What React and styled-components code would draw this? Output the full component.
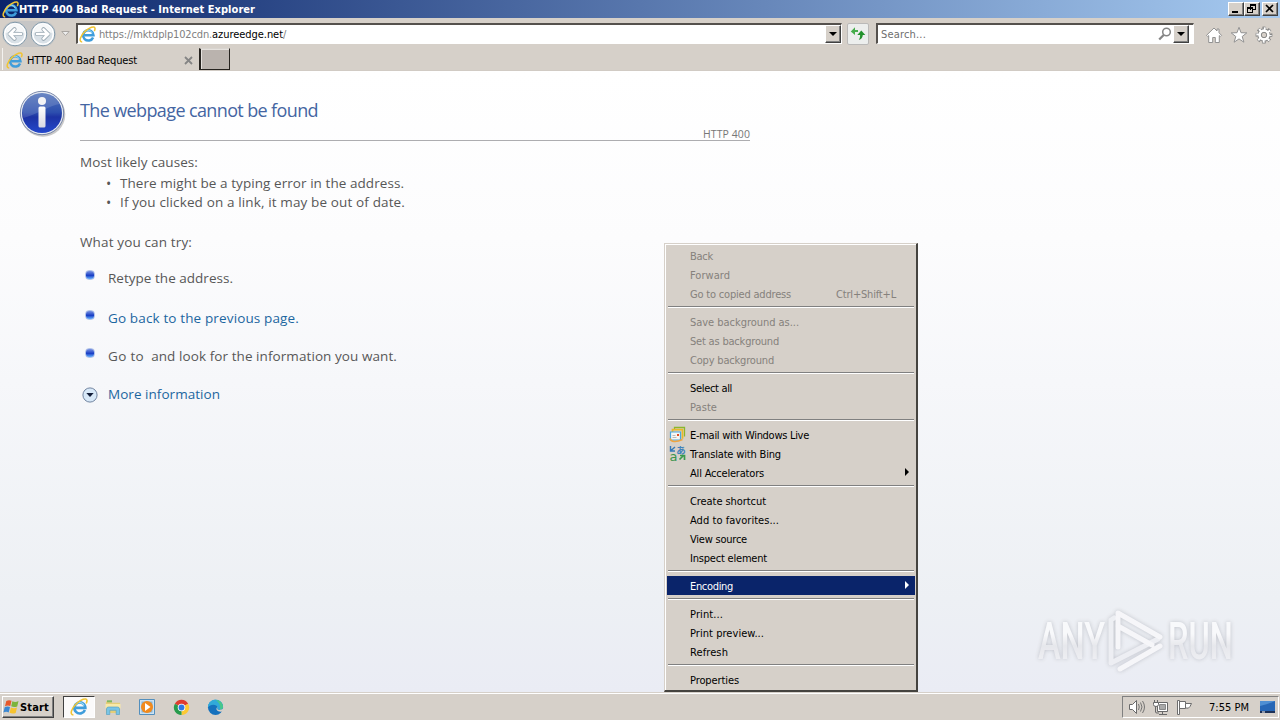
import React from 'react'
import styled, { createGlobalStyle, css } from 'styled-components'

const menuGroups = [
    [
        { label: 'Back', width: 23, disabled: true },
        { label: 'Forward', width: 40, disabled: true },
        { label: 'Go to copied address', width: 101, disabled: true, shortcut: 'Ctrl+Shift+L' },
    ],
    [
        { label: 'Save background as...', width: 109, disabled: true },
        { label: 'Set as background', width: 89, disabled: true },
        { label: 'Copy background', width: 84, disabled: true },
    ],
    [
        { label: 'Select all', width: 42 },
        { label: 'Paste', width: 27, disabled: true },
    ],
    [
        { label: 'E-mail with Windows Live', width: 119, icon: 'mail' },
        { label: 'Translate with Bing', width: 91, icon: 'translate' },
        { label: 'All Accelerators', width: 74, submenu: true },
    ],
    [
        { label: 'Create shortcut', width: 76 },
        { label: 'Add to favorites...', width: 89 },
        { label: 'View source', width: 57 },
        { label: 'Inspect element', width: 77 },
    ],
    [{ label: 'Encoding', width: 43, submenu: true, active: true }],
    [
        { label: 'Print...', width: 33 },
        { label: 'Print preview...', width: 74 },
        { label: 'Refresh', width: 38 },
    ],
    [{ label: 'Properties', width: 49 }],
]

/* stretches or tightens the tracking so a label takes the given width */
function Fit({ width, children }) {
    const ref = React.useRef(null)
    const [spacing, setSpacing] = React.useState(0)
    React.useLayoutEffect(() => {
        const natural = ref.current.getBoundingClientRect().width
        setSpacing((width - natural) / ref.current.textContent.length)
    }, [])
    return <FitText ref={ref} style={{ letterSpacing: `${spacing}px` }}>{children}</FitText>
}

const IeIcon = ({ size = 17 }) => (
    <svg width={size} height={size} viewBox="0 0 17 17" fill="none">
        <path d="M14.1 11.400A5.200 5.200 0 1 1 14.500 9.300H5.500" stroke="#3f9ddb" strokeWidth="2.500" />
        <path d="M13.300 7.200A4.600 4.600 0 0 0 4.900 6.700" stroke="#9bdcf7" strokeWidth="1" />
        <path d="M3.200 15.900C-.6 15.800 1.300 9.900 6 5.400 10.300 1.400 15.600-.6 16 2.300c.1.900-.2 1.900-.7 2.900" stroke="#f0c433" strokeWidth="1.500" />
    </svg>
)

const ArrowIcon = ({ flip }) => (
    <svg width="26" height="26" viewBox="0 0 26 26" fill="none">
        <circle cx="13" cy="13" r="11.800" fill="#e9eef2" stroke="#8299a9" strokeWidth="1" />
        <circle cx="13" cy="13" r="10.200" fill="#d9e1e7" stroke="#fff" strokeWidth="1.300" />
        <path d="M4 12a9 9 0 0 1 18 0c-5-2-13-2-18 0z" fill="#f6f8f9" />
        <g transform={flip ? 'matrix(-1 0 0 1 26 0)' : undefined}>
            <path d="M19 13H8M12.500 8.300 7.800 13l4.700 4.700" stroke="#9aa9b3" strokeWidth="4.200" strokeLinejoin="round" strokeLinecap="round" />
            <path d="M19 13H8M12.500 8.300 7.800 13l4.700 4.700" stroke="#fff" strokeWidth="2.600" strokeLinecap="round" />
        </g>
    </svg>
)

const InfoIcon = () => (
    <svg width="50" height="50" viewBox="0 0 50 50">
        <defs>
            <linearGradient id="info" x1="0" y1="0" x2="0" y2="1">
                <stop offset="0" stopColor="#5273b9" />
                <stop offset=".48" stopColor="#2d4fae" />
                <stop offset=".6" stopColor="#1d33a4" />
                <stop offset="1" stopColor="#2448cc" />
            </linearGradient>
            <linearGradient id="stem" x1="0" y1="0" x2="0" y2="1">
                <stop offset="0" stopColor="#fff" />
                <stop offset="1" stopColor="#d8d8e2" />
            </linearGradient>
        </defs>
        <circle cx="26" cy="26.500" r="22.300" fill="#777" opacity=".4" />
        <circle cx="25" cy="25" r="21.700" fill="#e6eaf2" stroke="#5d6f98" strokeWidth=".8" />
        <circle cx="25" cy="25" r="20" fill="url(#info)" />
        <path d="M5.500 24A19.500 19.500 0 0 1 42.500 16C34 17 21 26 6.500 30z" fill="#fff" opacity=".14" />
        <circle cx="25" cy="13" r="4" fill="#f4f4f6" />
        <rect x="21.500" y="18.500" width="7" height="21" rx="1.500" fill="url(#stem)" />
    </svg>
)

const RefreshIcon = () => (
    <svg width="16" height="14" viewBox="0 0 16 14">
        <path d="M.8 4.500 5 .3v2.600h3v2H5v3z" fill="#45ad4b" />
        <path d="M11.300 3.500 15.300 8h-2.500c-.2 2.700-1.500 4.300-4 5 1-1.500 1.300-3 1.300-5H7.300z" fill="#23922d" />
    </svg>
)

const SearchIcon = () => (
    <svg width="14" height="14" viewBox="0 0 14 14" fill="none" stroke="#858585">
        <circle cx="8.500" cy="5" r="3.800" strokeWidth="1.500" />
        <path d="M5.700 8 1.200 12.500" strokeWidth="2.300" />
    </svg>
)

const HomeIcon = () => (
    <svg width="18" height="18" viewBox="0 0 18 18" fill="#fff" stroke="#929292" strokeLinejoin="round">
        <path d="M9 2 1.500 9.300l1.200 1.200 1-.9V16.500h4v-5h2.600v5h4V9.600l1 .9 1.200-1.200L14 6.800V3h-2v2z" />
    </svg>
)

const StarIcon = () => (
    <svg width="18" height="18" viewBox="0 0 18 18" fill="#fff" stroke="#929292" strokeLinejoin="round">
        <path d="m9 1.300 2 5.400 5.800.2-4.600 3.600 1.700 5.700L9 12.900l-4.900 3.300 1.700-5.700L1.200 6.900 7 6.700z" />
    </svg>
)

const GearIcon = () => (
    <svg width="18" height="18" viewBox="0 0 18 18" fill="none">
        <circle cx="9" cy="9" r="5.700" stroke="#888" strokeWidth="2" />
        <circle cx="9" cy="9" r="6.600" stroke="#888" strokeWidth="3.600" strokeDasharray="3.200 1.984" strokeDashoffset="1.600" />
        <circle cx="9" cy="9" r="6.300" stroke="#fff" strokeWidth="2.800" strokeDasharray="1.800 3.148" strokeDashoffset=".900" />
        <circle cx="9" cy="9" r="4.400" stroke="#fff" strokeWidth="2.600" />
        <circle cx="9" cy="9" r="2.700" stroke="#888" />
    </svg>
)

const MailIcon = () => (
    <svg width="17" height="17" viewBox="0 0 17 17" fill="none">
        <path d="M5.500 4V1.500h10v9" stroke="#8ab62e" strokeWidth="1.300" />
        <path d="M3.500 6V3.700h10v9" stroke="#e9b82a" strokeWidth="1.700" />
        <path d="M1.500 6h10v8h-10z" fill="#f7f7f2" stroke="#49a7dd" strokeWidth="1.200" />
        <path d="M3.500 11.500h4M3.500 9.500h3" stroke="#bbb" />
        <path d="M8 8h2v2H8z" fill="#e24b22" />
        <path d="M1 12.500c1 3.500 6 4 12.500 1" stroke="#f0a541" strokeWidth="1.500" />
    </svg>
)

const TranslateIcon = () => (
    <TranslateSvg width="17" height="17" viewBox="0 0 17 17" fill="none">
        <path d="M1.500 1v5H6M2 5.500 6 2" stroke="#3579b8" strokeWidth="1.400" />
        <text x="7.300" y="8.500" fontSize="9.500" fontWeight="bold" fontFamily="Noto Sans CJK JP, sans-serif" fill="#4182ba">あ</text>
        <text x="0.500" y="15.500" fontSize="13" fontFamily="DejaVu Sans, sans-serif" fill="#3a944c">a</text>
        <path d="m10.500 14.500 4-4M11 10.500h4.500V15" stroke="#3b9b4d" strokeWidth="1.700" />
    </TranslateSvg>
)

const WindowsIcon = () => (
    <svg width="17" height="16" viewBox="0 0 17 16">
        <path d="M3.300 2Q6 .4 8.500 1.800L7.300 7Q4.600 5.900 2 7.300z" fill="#e8592b" />
        <path d="M9.400 2.300q2.900 1.400 6.100-.2l-1.300 5.300Q11 8.700 8.200 7.300z" fill="#7cb43c" />
        <path d="M1.700 8.300q2.700-1.300 5.300-.2l-1.300 5.300Q3 12.200.4 13.600z" fill="#3c88d2" />
        <path d="M7.900 8.400q2.900 1.400 6.100.1L12.700 13.900q-3.100 1.300-6.100-.1z" fill="#f6c330" />
    </svg>
)

const FolderIcon = () => (
    <svg width="18" height="18" viewBox="0 0 18 18">
        <path d="M2 3.500h5l1 1.300h8V15H2z" fill="#e5ce78" />
        <path d="M1.500 6h15v4.500h-15z" fill="#f8e9a8" />
        <path d="M3 2.300h5v2H3z" fill="#80b760" />
        <path d="M2.500 16.500V11q0-2 2-2h9q2 0 2 2v5.500h-3.300V12.300H5.800v4.200z" fill="#79c4e6" stroke="#4b9cc5" strokeWidth=".6" />
    </svg>
)

const PlayerIcon = () => (
    <svg width="18" height="18" viewBox="0 0 18 18">
        <path d="M1.500 1.500h15v15h-15z" fill="#cce2f2" stroke="#538fbd" />
        <path d="M3.500 3.500h11v11h-11z" fill="#85b2d5" />
        <circle cx="9" cy="9" r="6" fill="#f18a1d" />
        <path d="M7 5v8l5.500-4z" fill="#fff" />
    </svg>
)

const ChromeIcon = () => (
    <svg width="17" height="17" viewBox="0 0 18 18">
        <path d="M9 9 2 5A8 8 0 0 1 16 5z" fill="#df3c30" />
        <path d="M9 9h0L16 5a8 8 0 0 1-7 12z" fill="#fcc934" />
        <path d="M9 9v0l0 8A8 8 0 0 1 2 5z" fill="#289b4c" />
        <circle cx="9" cy="9" r="4" fill="#fff" />
        <circle cx="9" cy="9" r="3.100" fill="#2e78e4" />
    </svg>
)

const EdgeIcon = () => (
    <svg width="17" height="17" viewBox="0 0 18 18">
        <circle cx="9" cy="9" r="8" fill="#1571bd" />
        <path d="M1 9A8 8 0 0 1 17 8c.2 2.700-1.800 3.600-4.300 3.500-2.300-.1-1.700-1.200-1.700-2.500C11 5.700 3.500 4.800 1 9z" fill="#31a9d9" />
        <path d="M9 1c4.500 0 8 3.500 8 7 0 2-1.200 3.200-3.500 3.400C15 8 13 3 9 1z" fill="#48c78a" />
        <path d="M11 8.500c0 1.500-.8 2.500 1.700 3 1.500.1 3-.2 4.300-1.500v3c-2 1-5.700.5-6.600-1.300C9.600 10.500 10 9.500 11 8.500z" fill="#d6d0c9" />
    </svg>
)

const SoundIcon = () => (
    <svg width="18" height="16" viewBox="0 0 18 16" fill="none" stroke="#696969">
        <path d="M1.500 5.500h3l4-4v13l-4-4h-3z" fill="#fff" />
        <path d="M10.500 5q1.500 3 0 6M12.500 3.500q3 4.500 0 9M14.500 2q4 6 0 12" strokeWidth=".9" />
    </svg>
)

const NetworkIcon = () => (
    <svg width="18" height="17" viewBox="0 0 18 17" fill="#fff" stroke="#686868">
        <path d="M5.500 3.500h10v9h-10z" />
        <path d="M7.500 5.500h6v5h-6z" fill="#a9a9a9" stroke="#888" />
        <path d="M10.500 13v2M7 15.500h8M3.500 7v6q0 1 1.500 1h2" fill="none" />
        <path d="M1.500 3.500h5v2q0 2-2.500 2t-2.500-2zM2.500 1v2.500M5.500 1v2.500" />
    </svg>
)

const FlagIcon = () => (
    <svg width="17" height="17" viewBox="0 0 17 17" fill="#fff" stroke="#6d6d6d">
        <path d="M3.500 2.500h6v7h-6z" />
        <path d="M9.500 4.500h6l-1.500 3q-1 2.500-4.500 1.500z" />
        <path d="M1.500 1.500h2v14h-2z" />
    </svg>
)

const DesktopIcon = () => (
    <svg width="17" height="15" viewBox="0 0 17 15">
        <path d="M1 1h15v11H1z" fill="#2767b6" />
        <path d="M1 1h15Q10 4 1 6z" fill="#4f8fd3" />
        <path d="M1 11h15v2H1z" fill="#1d3157" />
        <path d="M3 11.500h3v1H3z" fill="#fff" />
    </svg>
)

const Watermark = () => (
    <WatermarkSvg viewBox="0 0 204 74" fill="none">
        <defs>
            <linearGradient id="fade" gradientUnits="userSpaceOnUse" x1="0" y1="17" x2="0" y2="54">
                <stop offset=".3" stopColor="#fbfbfd" />
                <stop offset=".62" stopColor="#e6e7eb" />
                <stop offset="1" stopColor="#efeff3" />
            </linearGradient>
        </defs>
        <g fontFamily="Roboto, sans-serif" fontSize="51" fontWeight="500" fill="url(#fade)">
            <text x="4" y="53.500" textLength="112" lengthAdjust="spacingAndGlyphs" transform="matrix(.6 0 0 1 1.600 0)">ANY</text>
            <text x="0" y="53.500" textLength="108" lengthAdjust="spacingAndGlyphs" transform="matrix(.6 0 0 1 134 0)">RUN</text>
        </g>
        <path d="M77 57V14l3-2M77 57l47-24" stroke="#eeeff3" strokeWidth="5" strokeLinecap="round" />
        <path d="M84 41V7L126 31M84 20l34 19M86 63l40-23" stroke="#f8f8fb" strokeWidth="5" strokeLinecap="round" strokeLinejoin="round" />
    </WatermarkSvg>
)

const menuIcons = { mail: <MailIcon />, translate: <TranslateIcon /> }

function ContextMenu() {
    return (
        <Menu>
            {menuGroups.map((group, index) => (
                <MenuGroup key={index}>
                    {group.map((item) => (
                        <MenuItem key={item.label} $active={item.active} $disabled={item.disabled}>
                            <MenuIcon>{menuIcons[item.icon]}</MenuIcon>
                            <MenuLabel><Fit width={item.width}>{item.label}</Fit></MenuLabel>
                            {item.shortcut && <Shortcut><Fit width={60}>{item.shortcut}</Fit></Shortcut>}
                            {item.submenu && <Submenu />}
                        </MenuItem>
                    ))}
                </MenuGroup>
            ))}
        </Menu>
    )
}

function App() {
    return (
        <Screen>
            <GlobalStyle />
            <TitleBar>
                <IeIcon />
                <Title><Fit width={236}>HTTP 400 Bad Request - Internet Explorer</Fit></Title>
                <WindowButton>
                    <svg width="10" height="10"><path d="M1 7h6v2H1z" /></svg>
                </WindowButton>
                <WindowButton>
                    <svg width="10" height="10" fill="none" stroke="#000">
                        <path d="M3.500 1v5M3 1.500h6M8.500 1v5M6 5.500h3M.5 4v5M0 4.500h6M5.500 4v5M0 8.500h6" />
                        <path d="M3 1h6M0 4h6" strokeWidth="2" />
                    </svg>
                </WindowButton>
                <WindowButton $gap>
                    <svg width="10" height="10"><path d="m1 1 7 7M8 1 1 8" stroke="#000" strokeWidth="1.700" /></svg>
                </WindowButton>
            </TitleBar>
            <Toolbar>
                <NavButtons>
                    <ArrowIcon />
                    <ArrowIcon flip />
                </NavButtons>
                <HistoryArrow>
                    <svg width="9" height="6" fill="#eee" stroke="#aaa6a2"><path d="M.8.5h7.400L4.500 4.500z" /></svg>
                </HistoryArrow>
                <AddressBar>
                    <IeIcon />
                    <Url>
                        <Fit width={113}>https://mktdplp102cdn.</Fit>
                        <b><Fit width={71}>azureedge.net</Fit></b>
                        <Fit width={4}>/</Fit>
                    </Url>
                    <DropButton />
                </AddressBar>
                <RefreshButton><RefreshIcon /></RefreshButton>
                <SearchBox>
                    <Placeholder><Fit width={45}>Search...</Fit></Placeholder>
                    <SearchIcon />
                    <DropButton $inset />
                </SearchBox>
                <Tools>
                    <HomeIcon />
                    <StarIcon />
                    <GearIcon />
                </Tools>
            </Toolbar>
            <TabBar>
                <Tab>
                    <IeIcon />
                    <TabTitle><Fit width={110}>HTTP 400 Bad Request</Fit></TabTitle>
                    <svg width="9" height="9"><path d="m1 1 7 7M8 1 1 8" stroke="#858585" strokeWidth="1.800" /></svg>
                </Tab>
                <NewTab />
            </TabBar>
            <Page>
                <InfoColumn><InfoIcon /></InfoColumn>
                <Article>
                    <Heading><Fit width={238}>The webpage cannot be found</Fit></Heading>
                    <Status><Fit width={47}>HTTP 400</Fit></Status>
                    <Lead><Fit width={118}>Most likely causes:</Fit></Lead>
                    <Causes>
                        <li><Fit width={284}>There might be a typing error in the address.</Fit></li>
                        <li><Fit width={285}>If you clicked on a link, it may be out of date.</Fit></li>
                    </Causes>
                    <Try><Fit width={112}>What you can try:</Fit></Try>
                    <Steps>
                        <Step $height={40}><Dot /><Fit width={125}>Retype the address.</Fit></Step>
                        <Step $height={38} $link><Dot /><Fit width={191}>Go back to the previous page.</Fit></Step>
                        <Step $height={38}><Dot /><Fit width={36}>Go to</Fit><Fit width={253}>&nbsp; and look for the information you want.</Fit></Step>
                        <Step $height={38} $link>
                            <svg width="16" height="16" viewBox="0 0 16 16">
                                <circle cx="8" cy="8" r="7.100" fill="#d7e8f8" stroke="#7184a0" />
                                <path d="M4.300 6h7.400L8 10z" fill="#111c38" />
                            </svg>
                            <Fit width={112}>More information</Fit>
                        </Step>
                    </Steps>
                </Article>
            </Page>
            <Taskbar>
                <StartButton><WindowsIcon /><StartLabel><Fit width={29}>Start</Fit></StartLabel></StartButton>
                <TaskButton $pressed><IeIcon size={18} /></TaskButton>
                <TaskButton><FolderIcon /></TaskButton>
                <TaskButton><PlayerIcon /></TaskButton>
                <TaskButton><ChromeIcon /></TaskButton>
                <TaskButton><EdgeIcon /></TaskButton>
                <Tray>
                    <SoundIcon />
                    <NetworkIcon />
                    <FlagIcon />
                    <Clock><Fit width={40}>7:55 PM</Fit></Clock>
                    <DesktopIcon />
                </Tray>
            </Taskbar>
            <Watermark />
            <ContextMenu />
        </Screen>
    )
}

const GlobalStyle = createGlobalStyle`
    *, *::before, *::after{
        box-sizing: border-box;
    }
    body{
        margin: 0;
        overflow: hidden;
    }
    svg{
        flex: none;
        display: block;
    }
`

const raised = css`
    background: #d6d0c9;
    border: 1px solid;
    border-color: #fff #404040 #404040 #fff;
    box-shadow: inset -1px -1px #808080;
`

const FitText = styled.span`
    white-space: pre;
`

const Screen = styled.div`
    position: relative;
    display: flex;
    flex-direction: column;
    width: 1280px;
    height: 720px;
    overflow: hidden;
    background: #d6d0c9;
    color: #000;
    font: 11px/14px 'DejaVu Sans Condensed', 'DejaVu Sans', sans-serif;
`

const TitleBar = styled.div`
    display: flex;
    align-items: center;
    height: 18px;
    padding: 0 2px;
    background: linear-gradient(90deg, #0a246a, #a6caf0);
`

const Title = styled.div`
    flex: 1;
    padding-top: 2px;
    color: #fff;
    font-weight: bold;
`

const WindowButton = styled.div`
    ${raised}
    display: flex;
    align-items: center;
    justify-content: center;
    width: 16px;
    height: 14px;
    margin-left: ${(props) => (props.$gap ? '2px' : '0')};
`

const Toolbar = styled.div`
    display: flex;
    align-items: center;
    height: 30px;
    padding: 1px 7px 0 2px;
`

const NavButtons = styled.div`
    display: flex;
    gap: 2px;
    width: 54px;
    border-radius: 14px;
    background: #c6c6c6;
`

const HistoryArrow = styled.div`
    display: flex;
    justify-content: center;
    width: 19px;
`

const field = css`
    display: flex;
    align-items: center;
    height: 21px;
    background: #fff;
    border: solid;
    border-width: 2px 1px 1px 2px;
    border-color: #55514d #fff #fff #55514d;
`

const AddressBar = styled.div`
    ${field}
    width: 766px;
    margin-left: 1px;
    padding-left: 1px;
`

const Url = styled.div`
    flex: 1;
    padding: 1px 0 0 3px;
    color: #808080;
    b{
        color: #000;
        font-weight: normal;
    }
`

const DropButton = styled.div`
    ${raised}
    display: flex;
    align-items: center;
    justify-content: center;
    width: 16px;
    height: 18px;
    margin-right: ${(props) => (props.$inset ? '4px' : '0')};
    &::after{
        content: '';
        border: solid transparent;
        border-width: 4px 4px 0;
        border-top-color: #000;
    }
`

const RefreshButton = styled.div`
    display: flex;
    align-items: center;
    justify-content: center;
    width: 22px;
    height: 22px;
    margin: 0 7px 0 5px;
    border: 1px solid #bab9b8;
    border-radius: 2px;
    background: #eceeed;
`

const SearchBox = styled.div`
    ${field}
    width: 318px;
    > svg{
        margin-right: 1px;
    }
`

const Placeholder = styled.div`
    flex: 1;
    padding: 1px 0 0 3px;
    color: #6e6e6e;
`

const Tools = styled.div`
    display: flex;
    gap: 7px;
    margin: 3px 0 0 auto;
`

const TabBar = styled.div`
    display: flex;
    height: 23px;
    border-bottom: 1px solid #d1cbc4;
`

const Tab = styled.div`
    display: flex;
    align-items: center;
    width: 197px;
    margin-left: 2px;
    padding: 2px 6px 0 3px;
    border-left: 1px solid #f4f2ef;
`

const TabTitle = styled.div`
    flex: 1;
    padding: 1px 0 0 4px;
`

const NewTab = styled.div`
    width: 31px;
    height: 22px;
    background: #bab3ae;
    border: solid;
    border-width: 1px 1px 1px 2px;
    border-color: #d8d4cf #26231f #26231f #26231f;
    box-shadow: inset 1px 1px #e6e2de;
`

const Page = styled.main`
    display: flex;
    height: 621px;
    background: linear-gradient(#fff 0%, #fcfcfd 27%, #f6f7fa 50%, #edf0f4 85%, #eaecf4 100%);
    color: #575757;
    font: 13.5px/19px 'Open Sans', sans-serif;
`

const InfoColumn = styled.div`
    width: 80px;
    padding: 17px 0 0 17px;
`

const Article = styled.div`
    width: 670px;
`

const Heading = styled.h1`
    margin: 0;
    padding-top: 27px;
    height: 54px;
    color: #4465a2;
    font-size: 18px;
    font-weight: normal;
    line-height: 24px;
`

const Status = styled.div`
    height: 16px;
    border-bottom: 1px solid #adadb0;
    color: #777;
    font-size: 10.5px;
    line-height: 18px;
    text-align: right;
`

const Lead = styled.div`
    padding-top: 12px;
`

const Causes = styled.ul`
    margin: 2px 0 0;
    padding: 0 0 0 26px;
    list-style: none;
    li{
        display: flex;
    }
    li::before{
        content: '•';
        width: 14px;
        font-size: 14px;
    }
`

const Try = styled.div`
    padding-top: 21px;
`

const Steps = styled.div`
    padding-top: 17px;
`

const Step = styled.div`
    display: flex;
    align-items: flex-start;
    height: ${(props) => props.$height}px;
    color: ${(props) => (props.$link ? '#1c66a0' : '#575757')};
    > svg{
        margin: 2px 10px 0 2px;
    }
`

const Dot = styled.i`
    width: 10px;
    height: 10px;
    margin: 1px 13px 0 5px;
    border: 1px solid #b5c6ea;
    border-radius: 4px;
    background: linear-gradient(#7c95e2, #183dc5 55%, #67b2ff);
`

const Taskbar = styled.div`
    display: flex;
    align-items: flex-start;
    height: 28px;
    padding: 3px 1px 0 2px;
    box-shadow: inset 0 1px #d6d0c9, inset 0 2px #fff;
`

const StartButton = styled.div`
    ${raised}
    display: flex;
    align-items: center;
    width: 52px;
    height: 22px;
    margin: 1px 9px 0 0;
    font-weight: bold;
`

const StartLabel = styled.div`
    padding-top: 2px;
`

const TaskButton = styled.div`
    display: flex;
    align-items: center;
    justify-content: center;
    width: ${(props) => (props.$pressed ? '32px' : '34px')};
    height: 22px;
    margin-top: 1px;
    ${(props) => props.$pressed && css`
        margin-right: 1px;
        background: #fbfafa;
        border: 1px solid;
        border-color: #404040 #fff #fff #404040;
    `}
`

const Tray = styled.div`
    display: flex;
    align-items: center;
    width: 157px;
    height: 22px;
    margin: 1px 0 0 auto;
    padding-left: 5px;
    gap: 6px;
    border: 1px solid;
    border-color: #808080 #fff #fff #808080;
`

const Clock = styled.div`
    width: 44px;
    margin-left: 10px;
    padding-top: 2px;
`

const Menu = styled.div`
    position: absolute;
    left: 664px;
    top: 243px;
    width: 254px;
    padding: 2px 1px 1px 2px;
    background: #d6d0c9;
    border: solid;
    border-width: 1px 2px 2px 1px;
    border-color: #d6d0c9 #45433f #45433f #d6d0c9;
    box-shadow: inset 1px 1px #fff;
`

const MenuGroup = styled.div`
    & + &::before{
        content: '';
        display: block;
        height: 2px;
        margin: 3px 1px 4px;
        border-top: 1px solid #808080;
        border-bottom: 1px solid #fff;
    }
`

const MenuItem = styled.div`
    display: flex;
    align-items: center;
    height: 19px;
    color: ${(props) => (props.$active ? '#fff' : props.$disabled ? '#85817c' : '#000')};
    background: ${(props) => (props.$active ? '#0a246a' : 'none')};
`

const MenuIcon = styled.div`
    width: 23px;
    padding-left: 2px;
`

const MenuLabel = styled.div`
    flex: 1;
    padding-top: 3px;
`

const Shortcut = styled.div`
    padding: 3px 19px 0 0;
`

const Submenu = styled.i`
    margin: 0 6px 2px 0;
    border: solid transparent;
    border-width: 4px 0 4px 4px;
    border-left-color: currentColor;
`

const TranslateSvg = styled.svg`
    overflow: visible;
`

const WatermarkSvg = styled.svg`
    position: absolute;
    left: 1034px;
    top: 606px;
    width: 204px;
    height: 74px;
    filter: drop-shadow(0 0 2px rgba(90, 90, 100, .35));
    opacity: .85;
`

export default App
